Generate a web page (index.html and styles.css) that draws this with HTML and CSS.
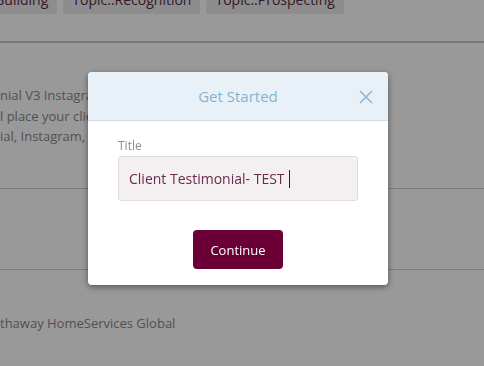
FILE: index.html
```html
<!DOCTYPE html>
<html lang="en">
<head>
  <meta charset="UTF-8" />
  <title>Get Started</title>
  <link rel="stylesheet" href="styles.css">
</head>
<body>
  <div class="page">
    <div class="tags">
      <span class="tag tag-first">Topic..Building</span>
      <span class="tag">Topic..Recognition</span>
      <span class="tag">Topic..Prospecting</span>
    </div>

    <div class="section">
      <p>nial V3 Instagram Post template to use for your social media</p>
      <p>l place your client testimonial in the text area and share</p>
      <p>ial, Instagram, Social Media, Testimonial</p>
    </div>

    <div class="section empty"></div>

    <div class="footer-text">
      <p>thaway HomeServices Global</p>
    </div>
  </div>

  <div class="overlay"></div>

  <div class="modal">
    <div class="modal-header">
      <h2>Get Started</h2>
      <button class="close" aria-label="Close">
        <svg width="14" height="14" viewBox="0 0 14 14">
          <path d="M1 1 L13 13 M13 1 L1 13" stroke="#8db8d2" stroke-width="1.6" fill="none"/>
        </svg>
      </button>
    </div>
    <div class="modal-body">
      <label class="field-label">Title</label>
      <div class="field-input">Client Testimonial- TEST<span class="caret"></span></div>
      <div class="actions">
        <button class="continue">Continue</button>
      </div>
    </div>
  </div>
</body>
</html>
```

FILE: styles.css
```css
body {
  margin: 0;
  font-family: "Open Sans", Arial, sans-serif;
  background: #fff;
  overflow: hidden;
  height: 366px;
}

.page {
  color: #888;
}

.tags {
  display: flex;
  gap: 6px;
  margin-top: -14px;
  padding-bottom: 27px;
  border-bottom: 2px solid #c8c8c8;
}

.tag {
  background: #ececec;
  color: #5b2b46;
  font-size: 14px;
  padding: 4px 9px 5px;
  border-radius: 2px;
}

.tag-first {
  margin-left: -56px;
}

.section {
  padding: 42px 0 41px;
  border-bottom: 1px solid #cfcfcf;
  font-size: 13px;
  line-height: 20.5px;
}

.section p {
  margin: 0;
  white-space: nowrap;
}

.section.empty {
  padding: 0;
  height: 80px;
}

.footer-text {
  padding-top: 44px;
  font-size: 13px;
}

.footer-text p {
  margin: 0;
}

.overlay {
  position: fixed;
  inset: 0;
  background: rgba(0, 0, 0, 0.4);
}

.modal {
  position: fixed;
  top: 72px;
  left: 88px;
  width: 300px;
  background: #fff;
  border-radius: 4px;
  box-shadow: 0 2px 6px rgba(0, 0, 0, 0.45);
  overflow: hidden;
}

.modal-header {
  position: relative;
  height: 48px;
  background: #e8f1f8;
  border-bottom: 1px solid #d3dce3;
  display: flex;
  align-items: center;
  justify-content: center;
}

.modal-header h2 {
  margin: 0;
  font-size: 15px;
  font-weight: normal;
  color: #86b3cf;
}

.close {
  position: absolute;
  right: 15px;
  top: 18px;
  border: none;
  background: none;
  padding: 0;
  line-height: 0;
}

.modal-body {
  padding: 16px 30px 16px;
}

.field-label {
  display: block;
  font-size: 12px;
  color: #8a8a8a;
  margin-bottom: 2px;
}

.field-input {
  height: 43px;
  background: #f4eff1;
  border: 1px solid #e2dddf;
  border-radius: 3px;
  padding: 0 10px;
  display: flex;
  align-items: center;
  font-size: 14px;
  color: #6a2a4c;
}

.caret {
  display: inline-block;
  width: 1px;
  height: 18px;
  background: #222;
  margin-left: 4px;
}

.actions {
  display: flex;
  justify-content: center;
  margin-top: 29px;
}

.continue {
  width: 90px;
  height: 39px;
  background: #6b0037;
  color: #fff;
  border: none;
  border-radius: 4px;
  font-family: "Open Sans", Arial, sans-serif;
  font-size: 13px;
}
```
